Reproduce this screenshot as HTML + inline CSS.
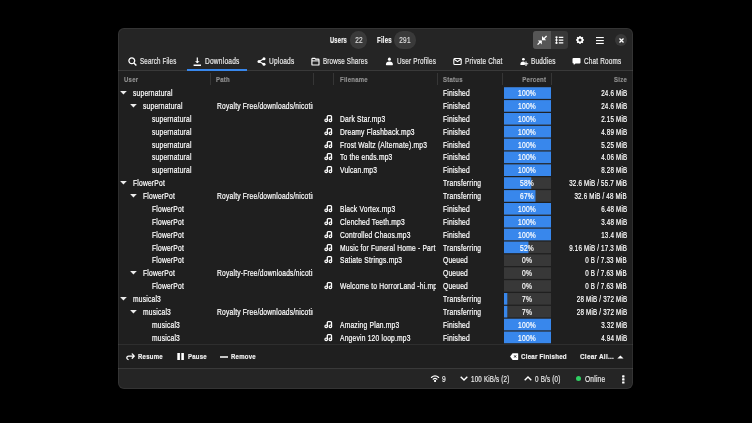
<!DOCTYPE html>
<html><head><meta charset="utf-8">
<style>
*{margin:0;padding:0;box-sizing:border-box}
html,body{width:752px;height:423px;background:#000;overflow:hidden}
body{font-family:"Liberation Sans",sans-serif;position:relative}
.win{position:absolute;left:118px;top:28px;width:515px;height:361px;background:#252525;border-radius:6px;overflow:hidden;will-change:transform}
.frame{position:absolute;left:118px;top:28px;width:515px;height:361px;border-radius:6px;box-shadow:inset 0 0 0 1px rgba(255,255,255,0.07)}
.s{position:absolute;white-space:nowrap;line-height:0;-webkit-text-stroke:0.2px currentColor}
.ic{position:absolute;overflow:visible}
.bx{position:absolute}
</style></head><body>
<div class="win">
<span class="s" style="left:211.7px;top:13px;font-size:8.2px;font-weight:bold;color:#f2f2f2;transform:scaleX(0.6989);transform-origin:left;letter-spacing:0.3px;">Users</span>
<div class="bx" style="left:231.8px;top:3.2px;width:17.5px;height:17.5px;border-radius:50%;background:#3a3a3a"></div>
<span class="s" style="left:241.1px;top:13px;font-size:8.2px;color:#dadada;transform:scaleX(0.7891);transform-origin:left;letter-spacing:0.25px;width:0;display:flex;justify-content:center;">22</span>
<span class="s" style="left:259px;top:13px;font-size:8.2px;font-weight:bold;color:#f2f2f2;transform:scaleX(0.7361);transform-origin:left;letter-spacing:0.3px;">Files</span>
<div class="bx" style="left:276.4px;top:3.2px;width:21.2px;height:17.5px;border-radius:8.75px;background:#3a3a3a"></div>
<span class="s" style="left:287px;top:13px;font-size:8.2px;color:#dadada;transform:scaleX(0.7891);transform-origin:left;letter-spacing:0.25px;width:0;display:flex;justify-content:center;">291</span>
<div class="bx" style="left:415px;top:3px;width:35px;height:18px;border-radius:3px;background:#383838;overflow:hidden"></div>
<div class="bx" style="left:415px;top:3px;width:18px;height:18px;border-radius:3px 0 0 3px;background:#565656"></div>
<svg class="ic" style="left:412px;top:1px" width="40" height="22" viewBox="530 29 40 22"><path d="M542 36L542 40.2L546.2 40.2Z" fill="#fff"/><path d="M546.6 36L543 39.6" stroke="#fff" stroke-width="1.3"/><path d="M537.8 40.4L541.8 40.4L541.8 44.4Z" fill="#fff"/><path d="M537.6 44.6L541.2 41" stroke="#fff" stroke-width="1.3"/><circle cx="556.5" cy="37.3" r="1.15" fill="#fff"/><circle cx="556.5" cy="40.1" r="1.15" fill="#fff"/><circle cx="556.5" cy="42.9" r="1.15" fill="#fff"/><path d="M556.5 37.3V42.9" stroke="#fff" stroke-width="0.7"/><path d="M558.8 37.3H563.3M558.8 40.1H563.3M558.8 42.9H563.3" stroke="#fff" stroke-width="1.2"/></svg>
<svg class="ic" style="left:457.7px;top:8.1px" width="8" height="8" viewBox="0 0 8 8"><circle cx="4" cy="4" r="2.4" fill="none" stroke="#fff" stroke-width="1.7"/><path d="M4 0.1V1.5M4 6.5V7.9M0.1 4H1.5M6.5 4H7.9M1.2 1.2L2.2 2.2M5.8 5.8L6.8 6.8M1.2 6.8L2.2 5.8M5.8 2.2L6.8 1.2" stroke="#fff" stroke-width="1.4"/></svg>
<svg class="ic" style="left:478.2px;top:9px" width="8" height="7" viewBox="0 0 8 7"><rect x="0" y="0" width="7.8" height="1.1" fill="#fff"/><rect x="0" y="3" width="7.8" height="1.1" fill="#fff"/><rect x="0" y="5.9" width="7.8" height="1.1" fill="#fff"/></svg>
<div class="bx" style="left:497px;top:6px;width:12px;height:12px;border-radius:50%;background:#383838"></div>
<svg class="ic" style="left:500.6px;top:10px" width="5" height="5" viewBox="0 0 5 5"><path d="M0.5 0.5L4.5 4.5M4.5 0.5L0.5 4.5" stroke="#fff" stroke-width="1.3"/></svg>
<svg class="ic" style="left:10.2px;top:28.8px" width="9" height="9" viewBox="0 0 9 9"><circle cx="3.8" cy="3.8" r="2.9" fill="none" stroke="#fff" stroke-width="1.3"/><path d="M5.9 5.9L8.4 8.4" stroke="#fff" stroke-width="1.4"/></svg>
<span class="s" style="left:22px;top:34px;font-size:8.2px;color:#e6e6e6;transform:scaleX(0.7516);transform-origin:left;letter-spacing:0.25px;">Search Files</span>
<svg class="ic" style="left:75.2px;top:28.8px" width="9" height="9" viewBox="0 0 9 9"><path d="M4.3 0.4V5.4" stroke="#fff" stroke-width="1.2"/><path d="M2 4.2H6.6L4.3 6.3Z" fill="#fff"/><path d="M0.6 8.2H8" stroke="#fff" stroke-width="1.4"/></svg>
<span class="s" style="left:86.7px;top:34px;font-size:8.2px;color:#e6e6e6;transform:scaleX(0.8079);transform-origin:left;letter-spacing:0.25px;">Downloads</span>
<svg class="ic" style="left:139px;top:28.8px" width="9" height="9" viewBox="0 0 9 9"><circle cx="2" cy="4.5" r="1.5" fill="#fff"/><circle cx="7" cy="1.8" r="1.5" fill="#fff"/><circle cx="7" cy="7.2" r="1.5" fill="#fff"/><path d="M2 4.5L7 1.8M2 4.5L7 7.2" stroke="#fff" stroke-width="1.1"/></svg>
<span class="s" style="left:150.6px;top:34px;font-size:8.2px;color:#e6e6e6;transform:scaleX(0.7985);transform-origin:left;letter-spacing:0.25px;">Uploads</span>
<svg class="ic" style="left:193.2px;top:28.8px" width="9" height="9" viewBox="0 0 9 9"><path d="M1.5 1.3H3.8L4.6 2.1H7.2Q8 2.1 8 2.9V7.4Q8 8 7.4 8H1.6Q0.9 8 0.9 7.4V1.9Q0.9 1.3 1.5 1.3Z" fill="none" stroke="#fff" stroke-width="1.15"/><path d="M1 3.9H7.9" stroke="#fff" stroke-width="1"/></svg>
<span class="s" style="left:205px;top:34px;font-size:8.2px;color:#e6e6e6;transform:scaleX(0.761);transform-origin:left;letter-spacing:0.25px;">Browse Shares</span>
<svg class="ic" style="left:267px;top:28.8px" width="9" height="9" viewBox="0 0 9 9"><ellipse cx="4.4" cy="2.2" rx="1.5" ry="1.6" fill="#fff"/><path d="M0.9 7.6Q0.9 4.4 4.4 4.4Q7.9 4.4 7.9 7.6Q7.9 8.2 7.3 8.2H1.5Q0.9 8.2 0.9 7.6Z" fill="#fff"/></svg>
<span class="s" style="left:278.6px;top:34px;font-size:8.2px;color:#e6e6e6;transform:scaleX(0.7797);transform-origin:left;letter-spacing:0.25px;">User Profiles</span>
<svg class="ic" style="left:334.5px;top:28.8px" width="9" height="9" viewBox="0 0 9 9"><rect x="0.8" y="1.5" width="7.4" height="6" rx="1" fill="none" stroke="#fff" stroke-width="1.1"/><path d="M1.2 2.2L4.5 4.6L7.8 2.2" fill="none" stroke="#fff" stroke-width="1.1"/></svg>
<span class="s" style="left:346.7px;top:34px;font-size:8.2px;color:#e6e6e6;transform:scaleX(0.7797);transform-origin:left;letter-spacing:0.25px;">Private Chat</span>
<svg class="ic" style="left:402px;top:28.8px" width="9" height="9" viewBox="0 0 9 9"><ellipse cx="3.4" cy="2.2" rx="1.4" ry="1.3" fill="#fff"/><path d="M0.4 7.4Q0.4 4.6 3.4 4.6Q4.4 4.6 4.8 5V8H1Q0.4 8 0.4 7.4Z" fill="#fff"/><path d="M6 4.6V9M3.9 6.8H8.2" stroke="#fff" stroke-width="1.1"/></svg>
<span class="s" style="left:412.6px;top:34px;font-size:8.2px;color:#e6e6e6;transform:scaleX(0.7891);transform-origin:left;letter-spacing:0.25px;">Buddies</span>
<svg class="ic" style="left:454px;top:28.8px" width="9" height="9" viewBox="0 0 9 9"><path d="M1.5 1H7.5Q8.5 1 8.5 2V5.5Q8.5 6.5 7.5 6.5H3.5L1.8 8V6.5H1.5Q0.5 6.5 0.5 5.5V2Q0.5 1 1.5 1Z" fill="#fff"/></svg>
<span class="s" style="left:466px;top:34px;font-size:8.2px;color:#e6e6e6;transform:scaleX(0.7797);transform-origin:left;letter-spacing:0.25px;">Chat Rooms</span>
<div class="bx" style="left:0px;top:43px;width:515px;height:297px;background:#1f1f1f"></div>
<div class="bx" style="left:0px;top:42px;width:515px;height:1px;background:#393939"></div>
<div class="bx" style="left:69px;top:41px;width:60px;height:2px;background:#3887ec"></div>
<span class="s" style="left:5.8px;top:52px;font-size:7.4px;font-weight:bold;color:#8f8f8f;transform:scaleX(0.8097);transform-origin:left;letter-spacing:0.3px;">User</span>
<span class="s" style="left:98px;top:52px;font-size:7.4px;font-weight:bold;color:#8f8f8f;transform:scaleX(0.8097);transform-origin:left;letter-spacing:0.3px;">Path</span>
<span class="s" style="left:222px;top:52px;font-size:7.4px;font-weight:bold;color:#8f8f8f;transform:scaleX(0.8097);transform-origin:left;letter-spacing:0.3px;">Filename</span>
<span class="s" style="left:324.5px;top:52px;font-size:7.4px;font-weight:bold;color:#8f8f8f;transform:scaleX(0.8097);transform-origin:left;letter-spacing:0.3px;">Status</span>
<span class="s" style="right:87.25px;top:52px;font-size:7.4px;font-weight:bold;color:#8f8f8f;transform:scaleX(0.82);transform-origin:right;letter-spacing:0.3px;">Percent</span>
<span class="s" style="right:6.26px;top:52px;font-size:7.4px;font-weight:bold;color:#8f8f8f;transform:scaleX(0.8097);transform-origin:right;letter-spacing:0.3px;">Size</span>
<div class="bx" style="left:92px;top:45px;width:1px;height:12px;background:#363636"></div>
<div class="bx" style="left:195px;top:45px;width:1px;height:12px;background:#363636"></div>
<div class="bx" style="left:215px;top:45px;width:1px;height:12px;background:#363636"></div>
<div class="bx" style="left:318.5px;top:45px;width:1px;height:12px;background:#363636"></div>
<div class="bx" style="left:384px;top:45px;width:1px;height:12px;background:#363636"></div>
<div class="bx" style="left:433px;top:45px;width:1px;height:12px;background:#363636"></div>
<svg class="ic" style="left:0;top:0" width="515" height="360" viewBox="118 28 515 360"><rect x="504" y="87.25" width="47" height="11.6" fill="#383838"/><rect x="504" y="87.25" width="47.00" height="11.6" fill="#3887ec"/><rect x="504" y="100.11" width="47" height="11.6" fill="#383838"/><rect x="504" y="100.11" width="47.00" height="11.6" fill="#3887ec"/><rect x="504" y="112.97" width="47" height="11.6" fill="#383838"/><rect x="504" y="112.97" width="47.00" height="11.6" fill="#3887ec"/><rect x="504" y="125.83" width="47" height="11.6" fill="#383838"/><rect x="504" y="125.83" width="47.00" height="11.6" fill="#3887ec"/><rect x="504" y="138.69" width="47" height="11.6" fill="#383838"/><rect x="504" y="138.69" width="47.00" height="11.6" fill="#3887ec"/><rect x="504" y="151.55" width="47" height="11.6" fill="#383838"/><rect x="504" y="151.55" width="47.00" height="11.6" fill="#3887ec"/><rect x="504" y="164.41" width="47" height="11.6" fill="#383838"/><rect x="504" y="164.41" width="47.00" height="11.6" fill="#3887ec"/><rect x="504" y="177.27" width="47" height="11.6" fill="#383838"/><rect x="504" y="177.27" width="27.26" height="11.6" fill="#3887ec"/><rect x="504" y="190.13" width="47" height="11.6" fill="#383838"/><rect x="504" y="190.13" width="31.49" height="11.6" fill="#3887ec"/><rect x="504" y="202.99" width="47" height="11.6" fill="#383838"/><rect x="504" y="202.99" width="47.00" height="11.6" fill="#3887ec"/><rect x="504" y="215.85" width="47" height="11.6" fill="#383838"/><rect x="504" y="215.85" width="47.00" height="11.6" fill="#3887ec"/><rect x="504" y="228.71" width="47" height="11.6" fill="#383838"/><rect x="504" y="228.71" width="47.00" height="11.6" fill="#3887ec"/><rect x="504" y="241.57" width="47" height="11.6" fill="#383838"/><rect x="504" y="241.57" width="24.44" height="11.6" fill="#3887ec"/><rect x="504" y="254.43" width="47" height="11.6" fill="#383838"/><rect x="504" y="267.29" width="47" height="11.6" fill="#383838"/><rect x="504" y="280.15" width="47" height="11.6" fill="#383838"/><rect x="504" y="293.01" width="47" height="11.6" fill="#383838"/><rect x="504" y="293.01" width="3.29" height="11.6" fill="#3887ec"/><rect x="504" y="305.87" width="47" height="11.6" fill="#383838"/><rect x="504" y="305.87" width="3.29" height="11.6" fill="#3887ec"/><rect x="504" y="318.73" width="47" height="11.6" fill="#383838"/><rect x="504" y="318.73" width="47.00" height="11.6" fill="#3887ec"/><rect x="504" y="331.59" width="47" height="11.6" fill="#383838"/><rect x="504" y="331.59" width="47.00" height="11.6" fill="#3887ec"/></svg>
<svg class="ic" style="left:2.4px;top:62px" width="7" height="5" viewBox="0 0 7 5"><path d="M0.1 0.9H6.8L3.45 4.4Z" fill="#ececec"/></svg>
<span class="s" style="left:15.4px;top:66px;font-size:8.2px;color:#ffffff;transform:scaleX(0.8173);transform-origin:left;letter-spacing:0.25px;">supernatural</span>
<span class="s" style="left:325px;top:66px;font-size:8.2px;color:#ffffff;transform:scaleX(0.8173);transform-origin:left;letter-spacing:0.25px;">Finished</span>
<span class="s" style="left:408.7px;top:66px;font-size:8.2px;color:#ffffff;transform:scaleX(0.8173);transform-origin:left;letter-spacing:0.25px;width:0;display:flex;justify-content:center;">100%</span>
<span class="s" style="right:5.81px;top:66px;font-size:8.2px;color:#ffffff;transform:scaleX(0.761);transform-origin:right;letter-spacing:0.25px;">24.6 MiB</span>
<svg class="ic" style="left:11.6px;top:75px" width="7" height="5" viewBox="0 0 7 5"><path d="M0.1 0.9H6.8L3.45 4.4Z" fill="#ececec"/></svg>
<span class="s" style="left:24.7px;top:79px;font-size:8.2px;color:#ffffff;transform:scaleX(0.8173);transform-origin:left;letter-spacing:0.25px;">supernatural</span>
<span class="s" style="left:99px;top:79px;font-size:8.2px;color:#ffffff;transform:scaleX(0.8173);transform-origin:left;letter-spacing:0.25px;clip-path:polygon(0 -20px,117.46px -20px,117.46px 20px,0 20px);">Royalty Free/downloads/nicotine</span>
<span class="s" style="left:325px;top:79px;font-size:8.2px;color:#ffffff;transform:scaleX(0.8173);transform-origin:left;letter-spacing:0.25px;">Finished</span>
<span class="s" style="left:408.7px;top:79px;font-size:8.2px;color:#ffffff;transform:scaleX(0.8173);transform-origin:left;letter-spacing:0.25px;width:0;display:flex;justify-content:center;">100%</span>
<span class="s" style="right:5.81px;top:79px;font-size:8.2px;color:#ffffff;transform:scaleX(0.761);transform-origin:right;letter-spacing:0.25px;">24.6 MiB</span>
<span class="s" style="left:33.9px;top:92px;font-size:8.2px;color:#ffffff;transform:scaleX(0.8173);transform-origin:left;letter-spacing:0.25px;">supernatural</span>
<svg class="ic" style="left:206px;top:86px" width="10" height="9" viewBox="0 0 10 9"><path d="M3.3 6V2.5Q3.3 1.6 4.2 1.6H6.6Q7.5 1.6 7.5 2.5V6" fill="none" stroke="#fff" stroke-width="1.3"/><circle cx="2.2" cy="6.3" r="1.3" fill="none" stroke="#fff" stroke-width="1.2"/><circle cx="6.4" cy="6.3" r="1.3" fill="none" stroke="#fff" stroke-width="1.2"/></svg>
<span class="s" style="left:222px;top:92px;font-size:8.2px;color:#ffffff;transform:scaleX(0.8173);transform-origin:left;letter-spacing:0.25px;clip-path:polygon(0 -20px,117.46px -20px,117.46px 20px,0 20px);">Dark Star.mp3</span>
<span class="s" style="left:325px;top:92px;font-size:8.2px;color:#ffffff;transform:scaleX(0.8173);transform-origin:left;letter-spacing:0.25px;">Finished</span>
<span class="s" style="left:408.7px;top:92px;font-size:8.2px;color:#ffffff;transform:scaleX(0.8173);transform-origin:left;letter-spacing:0.25px;width:0;display:flex;justify-content:center;">100%</span>
<span class="s" style="right:5.81px;top:92px;font-size:8.2px;color:#ffffff;transform:scaleX(0.761);transform-origin:right;letter-spacing:0.25px;">2.15 MiB</span>
<span class="s" style="left:33.9px;top:105px;font-size:8.2px;color:#ffffff;transform:scaleX(0.8173);transform-origin:left;letter-spacing:0.25px;">supernatural</span>
<svg class="ic" style="left:206px;top:99px" width="10" height="9" viewBox="0 0 10 9"><path d="M3.3 6V2.5Q3.3 1.6 4.2 1.6H6.6Q7.5 1.6 7.5 2.5V6" fill="none" stroke="#fff" stroke-width="1.3"/><circle cx="2.2" cy="6.3" r="1.3" fill="none" stroke="#fff" stroke-width="1.2"/><circle cx="6.4" cy="6.3" r="1.3" fill="none" stroke="#fff" stroke-width="1.2"/></svg>
<span class="s" style="left:222px;top:105px;font-size:8.2px;color:#ffffff;transform:scaleX(0.8173);transform-origin:left;letter-spacing:0.25px;clip-path:polygon(0 -20px,117.46px -20px,117.46px 20px,0 20px);">Dreamy Flashback.mp3</span>
<span class="s" style="left:325px;top:105px;font-size:8.2px;color:#ffffff;transform:scaleX(0.8173);transform-origin:left;letter-spacing:0.25px;">Finished</span>
<span class="s" style="left:408.7px;top:105px;font-size:8.2px;color:#ffffff;transform:scaleX(0.8173);transform-origin:left;letter-spacing:0.25px;width:0;display:flex;justify-content:center;">100%</span>
<span class="s" style="right:5.81px;top:105px;font-size:8.2px;color:#ffffff;transform:scaleX(0.761);transform-origin:right;letter-spacing:0.25px;">4.89 MiB</span>
<span class="s" style="left:33.9px;top:118px;font-size:8.2px;color:#ffffff;transform:scaleX(0.8173);transform-origin:left;letter-spacing:0.25px;">supernatural</span>
<svg class="ic" style="left:206px;top:112px" width="10" height="9" viewBox="0 0 10 9"><path d="M3.3 6V2.5Q3.3 1.6 4.2 1.6H6.6Q7.5 1.6 7.5 2.5V6" fill="none" stroke="#fff" stroke-width="1.3"/><circle cx="2.2" cy="6.3" r="1.3" fill="none" stroke="#fff" stroke-width="1.2"/><circle cx="6.4" cy="6.3" r="1.3" fill="none" stroke="#fff" stroke-width="1.2"/></svg>
<span class="s" style="left:222px;top:118px;font-size:8.2px;color:#ffffff;transform:scaleX(0.8173);transform-origin:left;letter-spacing:0.25px;clip-path:polygon(0 -20px,117.46px -20px,117.46px 20px,0 20px);">Frost Waltz (Alternate).mp3</span>
<span class="s" style="left:325px;top:118px;font-size:8.2px;color:#ffffff;transform:scaleX(0.8173);transform-origin:left;letter-spacing:0.25px;">Finished</span>
<span class="s" style="left:408.7px;top:118px;font-size:8.2px;color:#ffffff;transform:scaleX(0.8173);transform-origin:left;letter-spacing:0.25px;width:0;display:flex;justify-content:center;">100%</span>
<span class="s" style="right:5.81px;top:118px;font-size:8.2px;color:#ffffff;transform:scaleX(0.761);transform-origin:right;letter-spacing:0.25px;">5.25 MiB</span>
<span class="s" style="left:33.9px;top:130px;font-size:8.2px;color:#ffffff;transform:scaleX(0.8173);transform-origin:left;letter-spacing:0.25px;">supernatural</span>
<svg class="ic" style="left:206px;top:124px" width="10" height="9" viewBox="0 0 10 9"><path d="M3.3 6V2.5Q3.3 1.6 4.2 1.6H6.6Q7.5 1.6 7.5 2.5V6" fill="none" stroke="#fff" stroke-width="1.3"/><circle cx="2.2" cy="6.3" r="1.3" fill="none" stroke="#fff" stroke-width="1.2"/><circle cx="6.4" cy="6.3" r="1.3" fill="none" stroke="#fff" stroke-width="1.2"/></svg>
<span class="s" style="left:222px;top:130px;font-size:8.2px;color:#ffffff;transform:scaleX(0.8173);transform-origin:left;letter-spacing:0.25px;clip-path:polygon(0 -20px,117.46px -20px,117.46px 20px,0 20px);">To the ends.mp3</span>
<span class="s" style="left:325px;top:130px;font-size:8.2px;color:#ffffff;transform:scaleX(0.8173);transform-origin:left;letter-spacing:0.25px;">Finished</span>
<span class="s" style="left:408.7px;top:130px;font-size:8.2px;color:#ffffff;transform:scaleX(0.8173);transform-origin:left;letter-spacing:0.25px;width:0;display:flex;justify-content:center;">100%</span>
<span class="s" style="right:5.81px;top:130px;font-size:8.2px;color:#ffffff;transform:scaleX(0.761);transform-origin:right;letter-spacing:0.25px;">4.06 MiB</span>
<span class="s" style="left:33.9px;top:143px;font-size:8.2px;color:#ffffff;transform:scaleX(0.8173);transform-origin:left;letter-spacing:0.25px;">supernatural</span>
<svg class="ic" style="left:206px;top:137px" width="10" height="9" viewBox="0 0 10 9"><path d="M3.3 6V2.5Q3.3 1.6 4.2 1.6H6.6Q7.5 1.6 7.5 2.5V6" fill="none" stroke="#fff" stroke-width="1.3"/><circle cx="2.2" cy="6.3" r="1.3" fill="none" stroke="#fff" stroke-width="1.2"/><circle cx="6.4" cy="6.3" r="1.3" fill="none" stroke="#fff" stroke-width="1.2"/></svg>
<span class="s" style="left:222px;top:143px;font-size:8.2px;color:#ffffff;transform:scaleX(0.8173);transform-origin:left;letter-spacing:0.25px;clip-path:polygon(0 -20px,117.46px -20px,117.46px 20px,0 20px);">Vulcan.mp3</span>
<span class="s" style="left:325px;top:143px;font-size:8.2px;color:#ffffff;transform:scaleX(0.8173);transform-origin:left;letter-spacing:0.25px;">Finished</span>
<span class="s" style="left:408.7px;top:143px;font-size:8.2px;color:#ffffff;transform:scaleX(0.8173);transform-origin:left;letter-spacing:0.25px;width:0;display:flex;justify-content:center;">100%</span>
<span class="s" style="right:5.81px;top:143px;font-size:8.2px;color:#ffffff;transform:scaleX(0.761);transform-origin:right;letter-spacing:0.25px;">8.28 MiB</span>
<svg class="ic" style="left:2.4px;top:152px" width="7" height="5" viewBox="0 0 7 5"><path d="M0.1 0.9H6.8L3.45 4.4Z" fill="#ececec"/></svg>
<span class="s" style="left:15.4px;top:156px;font-size:8.2px;color:#ffffff;transform:scaleX(0.8173);transform-origin:left;letter-spacing:0.25px;">FlowerPot</span>
<span class="s" style="left:325px;top:156px;font-size:8.2px;color:#ffffff;transform:scaleX(0.8173);transform-origin:left;letter-spacing:0.25px;">Transferring</span>
<span class="s" style="left:408.7px;top:156px;font-size:8.2px;color:#ffffff;transform:scaleX(0.8173);transform-origin:left;letter-spacing:0.25px;width:0;display:flex;justify-content:center;">58%</span>
<span class="s" style="right:5.81px;top:156px;font-size:8.2px;color:#ffffff;transform:scaleX(0.761);transform-origin:right;letter-spacing:0.25px;">32.6 MiB / 55.7 MiB</span>
<svg class="ic" style="left:11.6px;top:165px" width="7" height="5" viewBox="0 0 7 5"><path d="M0.1 0.9H6.8L3.45 4.4Z" fill="#ececec"/></svg>
<span class="s" style="left:24.7px;top:169px;font-size:8.2px;color:#ffffff;transform:scaleX(0.8173);transform-origin:left;letter-spacing:0.25px;">FlowerPot</span>
<span class="s" style="left:99px;top:169px;font-size:8.2px;color:#ffffff;transform:scaleX(0.8173);transform-origin:left;letter-spacing:0.25px;clip-path:polygon(0 -20px,117.46px -20px,117.46px 20px,0 20px);">Royalty Free/downloads/nicotine</span>
<span class="s" style="left:325px;top:169px;font-size:8.2px;color:#ffffff;transform:scaleX(0.8173);transform-origin:left;letter-spacing:0.25px;">Transferring</span>
<span class="s" style="left:408.7px;top:169px;font-size:8.2px;color:#ffffff;transform:scaleX(0.8173);transform-origin:left;letter-spacing:0.25px;width:0;display:flex;justify-content:center;">67%</span>
<span class="s" style="right:5.81px;top:169px;font-size:8.2px;color:#ffffff;transform:scaleX(0.761);transform-origin:right;letter-spacing:0.25px;">32.6 MiB / 48 MiB</span>
<span class="s" style="left:33.9px;top:182px;font-size:8.2px;color:#ffffff;transform:scaleX(0.8173);transform-origin:left;letter-spacing:0.25px;">FlowerPot</span>
<svg class="ic" style="left:206px;top:176px" width="10" height="9" viewBox="0 0 10 9"><path d="M3.3 6V2.5Q3.3 1.6 4.2 1.6H6.6Q7.5 1.6 7.5 2.5V6" fill="none" stroke="#fff" stroke-width="1.3"/><circle cx="2.2" cy="6.3" r="1.3" fill="none" stroke="#fff" stroke-width="1.2"/><circle cx="6.4" cy="6.3" r="1.3" fill="none" stroke="#fff" stroke-width="1.2"/></svg>
<span class="s" style="left:222px;top:182px;font-size:8.2px;color:#ffffff;transform:scaleX(0.8173);transform-origin:left;letter-spacing:0.25px;clip-path:polygon(0 -20px,117.46px -20px,117.46px 20px,0 20px);">Black Vortex.mp3</span>
<span class="s" style="left:325px;top:182px;font-size:8.2px;color:#ffffff;transform:scaleX(0.8173);transform-origin:left;letter-spacing:0.25px;">Finished</span>
<span class="s" style="left:408.7px;top:182px;font-size:8.2px;color:#ffffff;transform:scaleX(0.8173);transform-origin:left;letter-spacing:0.25px;width:0;display:flex;justify-content:center;">100%</span>
<span class="s" style="right:5.81px;top:182px;font-size:8.2px;color:#ffffff;transform:scaleX(0.761);transform-origin:right;letter-spacing:0.25px;">6.48 MiB</span>
<span class="s" style="left:33.9px;top:195px;font-size:8.2px;color:#ffffff;transform:scaleX(0.8173);transform-origin:left;letter-spacing:0.25px;">FlowerPot</span>
<svg class="ic" style="left:206px;top:189px" width="10" height="9" viewBox="0 0 10 9"><path d="M3.3 6V2.5Q3.3 1.6 4.2 1.6H6.6Q7.5 1.6 7.5 2.5V6" fill="none" stroke="#fff" stroke-width="1.3"/><circle cx="2.2" cy="6.3" r="1.3" fill="none" stroke="#fff" stroke-width="1.2"/><circle cx="6.4" cy="6.3" r="1.3" fill="none" stroke="#fff" stroke-width="1.2"/></svg>
<span class="s" style="left:222px;top:195px;font-size:8.2px;color:#ffffff;transform:scaleX(0.8173);transform-origin:left;letter-spacing:0.25px;clip-path:polygon(0 -20px,117.46px -20px,117.46px 20px,0 20px);">Clenched Teeth.mp3</span>
<span class="s" style="left:325px;top:195px;font-size:8.2px;color:#ffffff;transform:scaleX(0.8173);transform-origin:left;letter-spacing:0.25px;">Finished</span>
<span class="s" style="left:408.7px;top:195px;font-size:8.2px;color:#ffffff;transform:scaleX(0.8173);transform-origin:left;letter-spacing:0.25px;width:0;display:flex;justify-content:center;">100%</span>
<span class="s" style="right:5.81px;top:195px;font-size:8.2px;color:#ffffff;transform:scaleX(0.761);transform-origin:right;letter-spacing:0.25px;">3.48 MiB</span>
<span class="s" style="left:33.9px;top:208px;font-size:8.2px;color:#ffffff;transform:scaleX(0.8173);transform-origin:left;letter-spacing:0.25px;">FlowerPot</span>
<svg class="ic" style="left:206px;top:202px" width="10" height="9" viewBox="0 0 10 9"><path d="M3.3 6V2.5Q3.3 1.6 4.2 1.6H6.6Q7.5 1.6 7.5 2.5V6" fill="none" stroke="#fff" stroke-width="1.3"/><circle cx="2.2" cy="6.3" r="1.3" fill="none" stroke="#fff" stroke-width="1.2"/><circle cx="6.4" cy="6.3" r="1.3" fill="none" stroke="#fff" stroke-width="1.2"/></svg>
<span class="s" style="left:222px;top:208px;font-size:8.2px;color:#ffffff;transform:scaleX(0.8173);transform-origin:left;letter-spacing:0.25px;clip-path:polygon(0 -20px,117.46px -20px,117.46px 20px,0 20px);">Controlled Chaos.mp3</span>
<span class="s" style="left:325px;top:208px;font-size:8.2px;color:#ffffff;transform:scaleX(0.8173);transform-origin:left;letter-spacing:0.25px;">Finished</span>
<span class="s" style="left:408.7px;top:208px;font-size:8.2px;color:#ffffff;transform:scaleX(0.8173);transform-origin:left;letter-spacing:0.25px;width:0;display:flex;justify-content:center;">100%</span>
<span class="s" style="right:5.81px;top:208px;font-size:8.2px;color:#ffffff;transform:scaleX(0.761);transform-origin:right;letter-spacing:0.25px;">13.4 MiB</span>
<span class="s" style="left:33.9px;top:221px;font-size:8.2px;color:#ffffff;transform:scaleX(0.8173);transform-origin:left;letter-spacing:0.25px;">FlowerPot</span>
<svg class="ic" style="left:206px;top:215px" width="10" height="9" viewBox="0 0 10 9"><path d="M3.3 6V2.5Q3.3 1.6 4.2 1.6H6.6Q7.5 1.6 7.5 2.5V6" fill="none" stroke="#fff" stroke-width="1.3"/><circle cx="2.2" cy="6.3" r="1.3" fill="none" stroke="#fff" stroke-width="1.2"/><circle cx="6.4" cy="6.3" r="1.3" fill="none" stroke="#fff" stroke-width="1.2"/></svg>
<span class="s" style="left:222px;top:221px;font-size:8.2px;color:#ffffff;transform:scaleX(0.8173);transform-origin:left;letter-spacing:0.25px;clip-path:polygon(0 -20px,117.46px -20px,117.46px 20px,0 20px);">Music for Funeral Home - Part 1.mp3</span>
<span class="s" style="left:325px;top:221px;font-size:8.2px;color:#ffffff;transform:scaleX(0.8173);transform-origin:left;letter-spacing:0.25px;">Transferring</span>
<span class="s" style="left:408.7px;top:221px;font-size:8.2px;color:#ffffff;transform:scaleX(0.8173);transform-origin:left;letter-spacing:0.25px;width:0;display:flex;justify-content:center;">52%</span>
<span class="s" style="right:5.81px;top:221px;font-size:8.2px;color:#ffffff;transform:scaleX(0.761);transform-origin:right;letter-spacing:0.25px;">9.16 MiB / 17.3 MiB</span>
<span class="s" style="left:33.9px;top:233px;font-size:8.2px;color:#ffffff;transform:scaleX(0.8173);transform-origin:left;letter-spacing:0.25px;">FlowerPot</span>
<svg class="ic" style="left:206px;top:227px" width="10" height="9" viewBox="0 0 10 9"><path d="M3.3 6V2.5Q3.3 1.6 4.2 1.6H6.6Q7.5 1.6 7.5 2.5V6" fill="none" stroke="#fff" stroke-width="1.3"/><circle cx="2.2" cy="6.3" r="1.3" fill="none" stroke="#fff" stroke-width="1.2"/><circle cx="6.4" cy="6.3" r="1.3" fill="none" stroke="#fff" stroke-width="1.2"/></svg>
<span class="s" style="left:222px;top:233px;font-size:8.2px;color:#ffffff;transform:scaleX(0.8173);transform-origin:left;letter-spacing:0.25px;clip-path:polygon(0 -20px,117.46px -20px,117.46px 20px,0 20px);">Satiate Strings.mp3</span>
<span class="s" style="left:325px;top:233px;font-size:8.2px;color:#ffffff;transform:scaleX(0.8173);transform-origin:left;letter-spacing:0.25px;">Queued</span>
<span class="s" style="left:408.7px;top:233px;font-size:8.2px;color:#ffffff;transform:scaleX(0.8173);transform-origin:left;letter-spacing:0.25px;width:0;display:flex;justify-content:center;">0%</span>
<span class="s" style="right:5.81px;top:233px;font-size:8.2px;color:#ffffff;transform:scaleX(0.761);transform-origin:right;letter-spacing:0.25px;">0 B / 7.33 MiB</span>
<svg class="ic" style="left:11.6px;top:242px" width="7" height="5" viewBox="0 0 7 5"><path d="M0.1 0.9H6.8L3.45 4.4Z" fill="#ececec"/></svg>
<span class="s" style="left:24.7px;top:246px;font-size:8.2px;color:#ffffff;transform:scaleX(0.8173);transform-origin:left;letter-spacing:0.25px;">FlowerPot</span>
<span class="s" style="left:99px;top:246px;font-size:8.2px;color:#ffffff;transform:scaleX(0.8173);transform-origin:left;letter-spacing:0.25px;clip-path:polygon(0 -20px,117.46px -20px,117.46px 20px,0 20px);">Royalty-Free/downloads/nicotine</span>
<span class="s" style="left:325px;top:246px;font-size:8.2px;color:#ffffff;transform:scaleX(0.8173);transform-origin:left;letter-spacing:0.25px;">Queued</span>
<span class="s" style="left:408.7px;top:246px;font-size:8.2px;color:#ffffff;transform:scaleX(0.8173);transform-origin:left;letter-spacing:0.25px;width:0;display:flex;justify-content:center;">0%</span>
<span class="s" style="right:5.81px;top:246px;font-size:8.2px;color:#ffffff;transform:scaleX(0.761);transform-origin:right;letter-spacing:0.25px;">0 B / 7.63 MiB</span>
<span class="s" style="left:33.9px;top:259px;font-size:8.2px;color:#ffffff;transform:scaleX(0.8173);transform-origin:left;letter-spacing:0.25px;">FlowerPot</span>
<svg class="ic" style="left:206px;top:253px" width="10" height="9" viewBox="0 0 10 9"><path d="M3.3 6V2.5Q3.3 1.6 4.2 1.6H6.6Q7.5 1.6 7.5 2.5V6" fill="none" stroke="#fff" stroke-width="1.3"/><circle cx="2.2" cy="6.3" r="1.3" fill="none" stroke="#fff" stroke-width="1.2"/><circle cx="6.4" cy="6.3" r="1.3" fill="none" stroke="#fff" stroke-width="1.2"/></svg>
<span class="s" style="left:222px;top:259px;font-size:8.2px;color:#ffffff;transform:scaleX(0.8173);transform-origin:left;letter-spacing:0.25px;clip-path:polygon(0 -20px,117.46px -20px,117.46px 20px,0 20px);">Welcome to HorrorLand -hi.mp3</span>
<span class="s" style="left:325px;top:259px;font-size:8.2px;color:#ffffff;transform:scaleX(0.8173);transform-origin:left;letter-spacing:0.25px;">Queued</span>
<span class="s" style="left:408.7px;top:259px;font-size:8.2px;color:#ffffff;transform:scaleX(0.8173);transform-origin:left;letter-spacing:0.25px;width:0;display:flex;justify-content:center;">0%</span>
<span class="s" style="right:5.81px;top:259px;font-size:8.2px;color:#ffffff;transform:scaleX(0.761);transform-origin:right;letter-spacing:0.25px;">0 B / 7.63 MiB</span>
<svg class="ic" style="left:2.4px;top:268px" width="7" height="5" viewBox="0 0 7 5"><path d="M0.1 0.9H6.8L3.45 4.4Z" fill="#ececec"/></svg>
<span class="s" style="left:15.4px;top:272px;font-size:8.2px;color:#ffffff;transform:scaleX(0.8173);transform-origin:left;letter-spacing:0.25px;">musical3</span>
<span class="s" style="left:325px;top:272px;font-size:8.2px;color:#ffffff;transform:scaleX(0.8173);transform-origin:left;letter-spacing:0.25px;">Transferring</span>
<span class="s" style="left:408.7px;top:272px;font-size:8.2px;color:#ffffff;transform:scaleX(0.8173);transform-origin:left;letter-spacing:0.25px;width:0;display:flex;justify-content:center;">7%</span>
<span class="s" style="right:5.81px;top:272px;font-size:8.2px;color:#ffffff;transform:scaleX(0.761);transform-origin:right;letter-spacing:0.25px;">28 MiB / 372 MiB</span>
<svg class="ic" style="left:11.6px;top:281px" width="7" height="5" viewBox="0 0 7 5"><path d="M0.1 0.9H6.8L3.45 4.4Z" fill="#ececec"/></svg>
<span class="s" style="left:24.7px;top:285px;font-size:8.2px;color:#ffffff;transform:scaleX(0.8173);transform-origin:left;letter-spacing:0.25px;">musical3</span>
<span class="s" style="left:99px;top:285px;font-size:8.2px;color:#ffffff;transform:scaleX(0.8173);transform-origin:left;letter-spacing:0.25px;clip-path:polygon(0 -20px,117.46px -20px,117.46px 20px,0 20px);">Royalty Free/downloads/nicotine</span>
<span class="s" style="left:325px;top:285px;font-size:8.2px;color:#ffffff;transform:scaleX(0.8173);transform-origin:left;letter-spacing:0.25px;">Transferring</span>
<span class="s" style="left:408.7px;top:285px;font-size:8.2px;color:#ffffff;transform:scaleX(0.8173);transform-origin:left;letter-spacing:0.25px;width:0;display:flex;justify-content:center;">7%</span>
<span class="s" style="right:5.81px;top:285px;font-size:8.2px;color:#ffffff;transform:scaleX(0.761);transform-origin:right;letter-spacing:0.25px;">28 MiB / 372 MiB</span>
<span class="s" style="left:33.9px;top:298px;font-size:8.2px;color:#ffffff;transform:scaleX(0.8173);transform-origin:left;letter-spacing:0.25px;">musical3</span>
<svg class="ic" style="left:206px;top:292px" width="10" height="9" viewBox="0 0 10 9"><path d="M3.3 6V2.5Q3.3 1.6 4.2 1.6H6.6Q7.5 1.6 7.5 2.5V6" fill="none" stroke="#fff" stroke-width="1.3"/><circle cx="2.2" cy="6.3" r="1.3" fill="none" stroke="#fff" stroke-width="1.2"/><circle cx="6.4" cy="6.3" r="1.3" fill="none" stroke="#fff" stroke-width="1.2"/></svg>
<span class="s" style="left:222px;top:298px;font-size:8.2px;color:#ffffff;transform:scaleX(0.8173);transform-origin:left;letter-spacing:0.25px;clip-path:polygon(0 -20px,117.46px -20px,117.46px 20px,0 20px);">Amazing Plan.mp3</span>
<span class="s" style="left:325px;top:298px;font-size:8.2px;color:#ffffff;transform:scaleX(0.8173);transform-origin:left;letter-spacing:0.25px;">Finished</span>
<span class="s" style="left:408.7px;top:298px;font-size:8.2px;color:#ffffff;transform:scaleX(0.8173);transform-origin:left;letter-spacing:0.25px;width:0;display:flex;justify-content:center;">100%</span>
<span class="s" style="right:5.81px;top:298px;font-size:8.2px;color:#ffffff;transform:scaleX(0.761);transform-origin:right;letter-spacing:0.25px;">3.32 MiB</span>
<span class="s" style="left:33.9px;top:311px;font-size:8.2px;color:#ffffff;transform:scaleX(0.8173);transform-origin:left;letter-spacing:0.25px;">musical3</span>
<svg class="ic" style="left:206px;top:305px" width="10" height="9" viewBox="0 0 10 9"><path d="M3.3 6V2.5Q3.3 1.6 4.2 1.6H6.6Q7.5 1.6 7.5 2.5V6" fill="none" stroke="#fff" stroke-width="1.3"/><circle cx="2.2" cy="6.3" r="1.3" fill="none" stroke="#fff" stroke-width="1.2"/><circle cx="6.4" cy="6.3" r="1.3" fill="none" stroke="#fff" stroke-width="1.2"/></svg>
<span class="s" style="left:222px;top:311px;font-size:8.2px;color:#ffffff;transform:scaleX(0.8173);transform-origin:left;letter-spacing:0.25px;clip-path:polygon(0 -20px,117.46px -20px,117.46px 20px,0 20px);">Angevin 120 loop.mp3</span>
<span class="s" style="left:325px;top:311px;font-size:8.2px;color:#ffffff;transform:scaleX(0.8173);transform-origin:left;letter-spacing:0.25px;">Finished</span>
<span class="s" style="left:408.7px;top:311px;font-size:8.2px;color:#ffffff;transform:scaleX(0.8173);transform-origin:left;letter-spacing:0.25px;width:0;display:flex;justify-content:center;">100%</span>
<span class="s" style="right:5.81px;top:311px;font-size:8.2px;color:#ffffff;transform:scaleX(0.761);transform-origin:right;letter-spacing:0.25px;">4.94 MiB</span>
<div class="bx" style="left:0px;top:316px;width:515px;height:1px;background:#2e2e2e"></div>
<svg class="ic" style="left:8px;top:325px" width="10" height="8" viewBox="0 0 10 8"><path d="M2.1 6.5Q0.7 5.9 0.8 4.6Q1 3.1 2.6 3.1H7.9M6.2 0.9L8.3 3.1L6.2 5.3" fill="none" stroke="#fff" stroke-width="1.3" stroke-linecap="round" stroke-linejoin="round"/></svg>
<span class="s" style="left:20px;top:329px;font-size:7.8px;font-weight:bold;color:#f0f0f0;transform:scaleX(0.7712);transform-origin:left;letter-spacing:0.3px;">Resume</span>
<svg class="ic" style="left:59px;top:325px" width="8" height="7" viewBox="0 0 8 7"><rect x="0.3" y="0" width="2.6" height="7" fill="#fff"/><rect x="4.3" y="0" width="2.6" height="7" fill="#fff"/></svg>
<span class="s" style="left:70px;top:329px;font-size:7.8px;font-weight:bold;color:#f0f0f0;transform:scaleX(0.7712);transform-origin:left;letter-spacing:0.3px;">Pause</span>
<svg class="ic" style="left:102px;top:328px" width="8" height="2" viewBox="0 0 8 2"><path d="M0 1H8" stroke="#fff" stroke-width="1.3"/></svg>
<span class="s" style="left:113px;top:329px;font-size:7.8px;font-weight:bold;color:#f0f0f0;transform:scaleX(0.7712);transform-origin:left;letter-spacing:0.3px;">Remove</span>
<svg class="ic" style="left:391.5px;top:325px" width="9" height="8" viewBox="0 0 9 8"><path d="M2.6 0.2H7.6Q8.2 0.2 8.2 0.8V6.3Q8.2 6.9 7.6 6.9H2.6L0.1 3.55Z" fill="#fff"/><path d="M4.2 2.4L6.1 4.5M6.1 2.4L4.2 4.5" stroke="#1f1f1f" stroke-width="1"/></svg>
<span class="s" style="left:403px;top:329px;font-size:7.8px;font-weight:bold;color:#f0f0f0;transform:scaleX(0.7907);transform-origin:left;letter-spacing:0.3px;">Clear Finished</span>
<span class="s" style="left:462px;top:329px;font-size:7.8px;font-weight:bold;color:#f0f0f0;transform:scaleX(0.82);transform-origin:left;letter-spacing:0.3px;">Clear All...</span>
<svg class="ic" style="left:499px;top:326.5px" width="7" height="5" viewBox="0 0 7 5"><path d="M0.3 3.6H6.5L3.4 0.4Z" fill="#fff"/></svg>
<div class="bx" style="left:0px;top:340px;width:515px;height:1px;background:#393939"></div>
<svg class="ic" style="left:310px;top:344px" width="14" height="14" viewBox="428 372 14 14"><path d="M431.4 377.5Q435.05 374.4 438.7 377.5M433.2 379.2Q435.05 377.6 436.9 379.2" fill="none" stroke="#fff" stroke-width="1.15" stroke-linecap="round"/><rect x="434.1" y="380" width="1.9" height="1.9" rx="0.3" fill="#fff"/></svg>
<span class="s" style="left:323.6px;top:352px;font-size:8.2px;color:#e6e6e6;transform:scaleX(0.8173);transform-origin:left;letter-spacing:0.25px;">9</span>
<svg class="ic" style="left:342px;top:348px" width="8" height="5" viewBox="0 0 8 5"><path d="M0.7 0.7L4 4L7.3 0.7" fill="none" stroke="#fff" stroke-width="1.4"/></svg>
<span class="s" style="left:353.1px;top:352px;font-size:8.2px;color:#e6e6e6;transform:scaleX(0.761);transform-origin:left;letter-spacing:0.25px;">100 KiB/s (2)</span>
<svg class="ic" style="left:405.5px;top:348px" width="8" height="5" viewBox="0 0 8 5"><path d="M0.7 4.3L4 1L7.3 4.3" fill="none" stroke="#fff" stroke-width="1.4"/></svg>
<span class="s" style="left:416.6px;top:352px;font-size:8.2px;color:#e6e6e6;transform:scaleX(0.7703);transform-origin:left;letter-spacing:0.25px;">0 B/s (0)</span>
<div class="bx" style="left:457.8px;top:348.2px;width:5px;height:5px;border-radius:50%;background:#2fcf62"></div>
<span class="s" style="left:467.3px;top:352px;font-size:8.2px;color:#e6e6e6;transform:scaleX(0.8079);transform-origin:left;letter-spacing:0.25px;">Online</span>
<svg class="ic" style="left:503.7px;top:346.8px" width="3" height="9" viewBox="0 0 3 9"><rect x="0.1" y="0.3" width="2.4" height="2.2" rx="0.4" fill="#fff"/><rect x="0.1" y="3.35" width="2.4" height="2.2" rx="0.4" fill="#fff"/><rect x="0.1" y="6.4" width="2.4" height="2.2" rx="0.4" fill="#fff"/></svg>
</div>
<div class="frame"></div>
</body></html>
